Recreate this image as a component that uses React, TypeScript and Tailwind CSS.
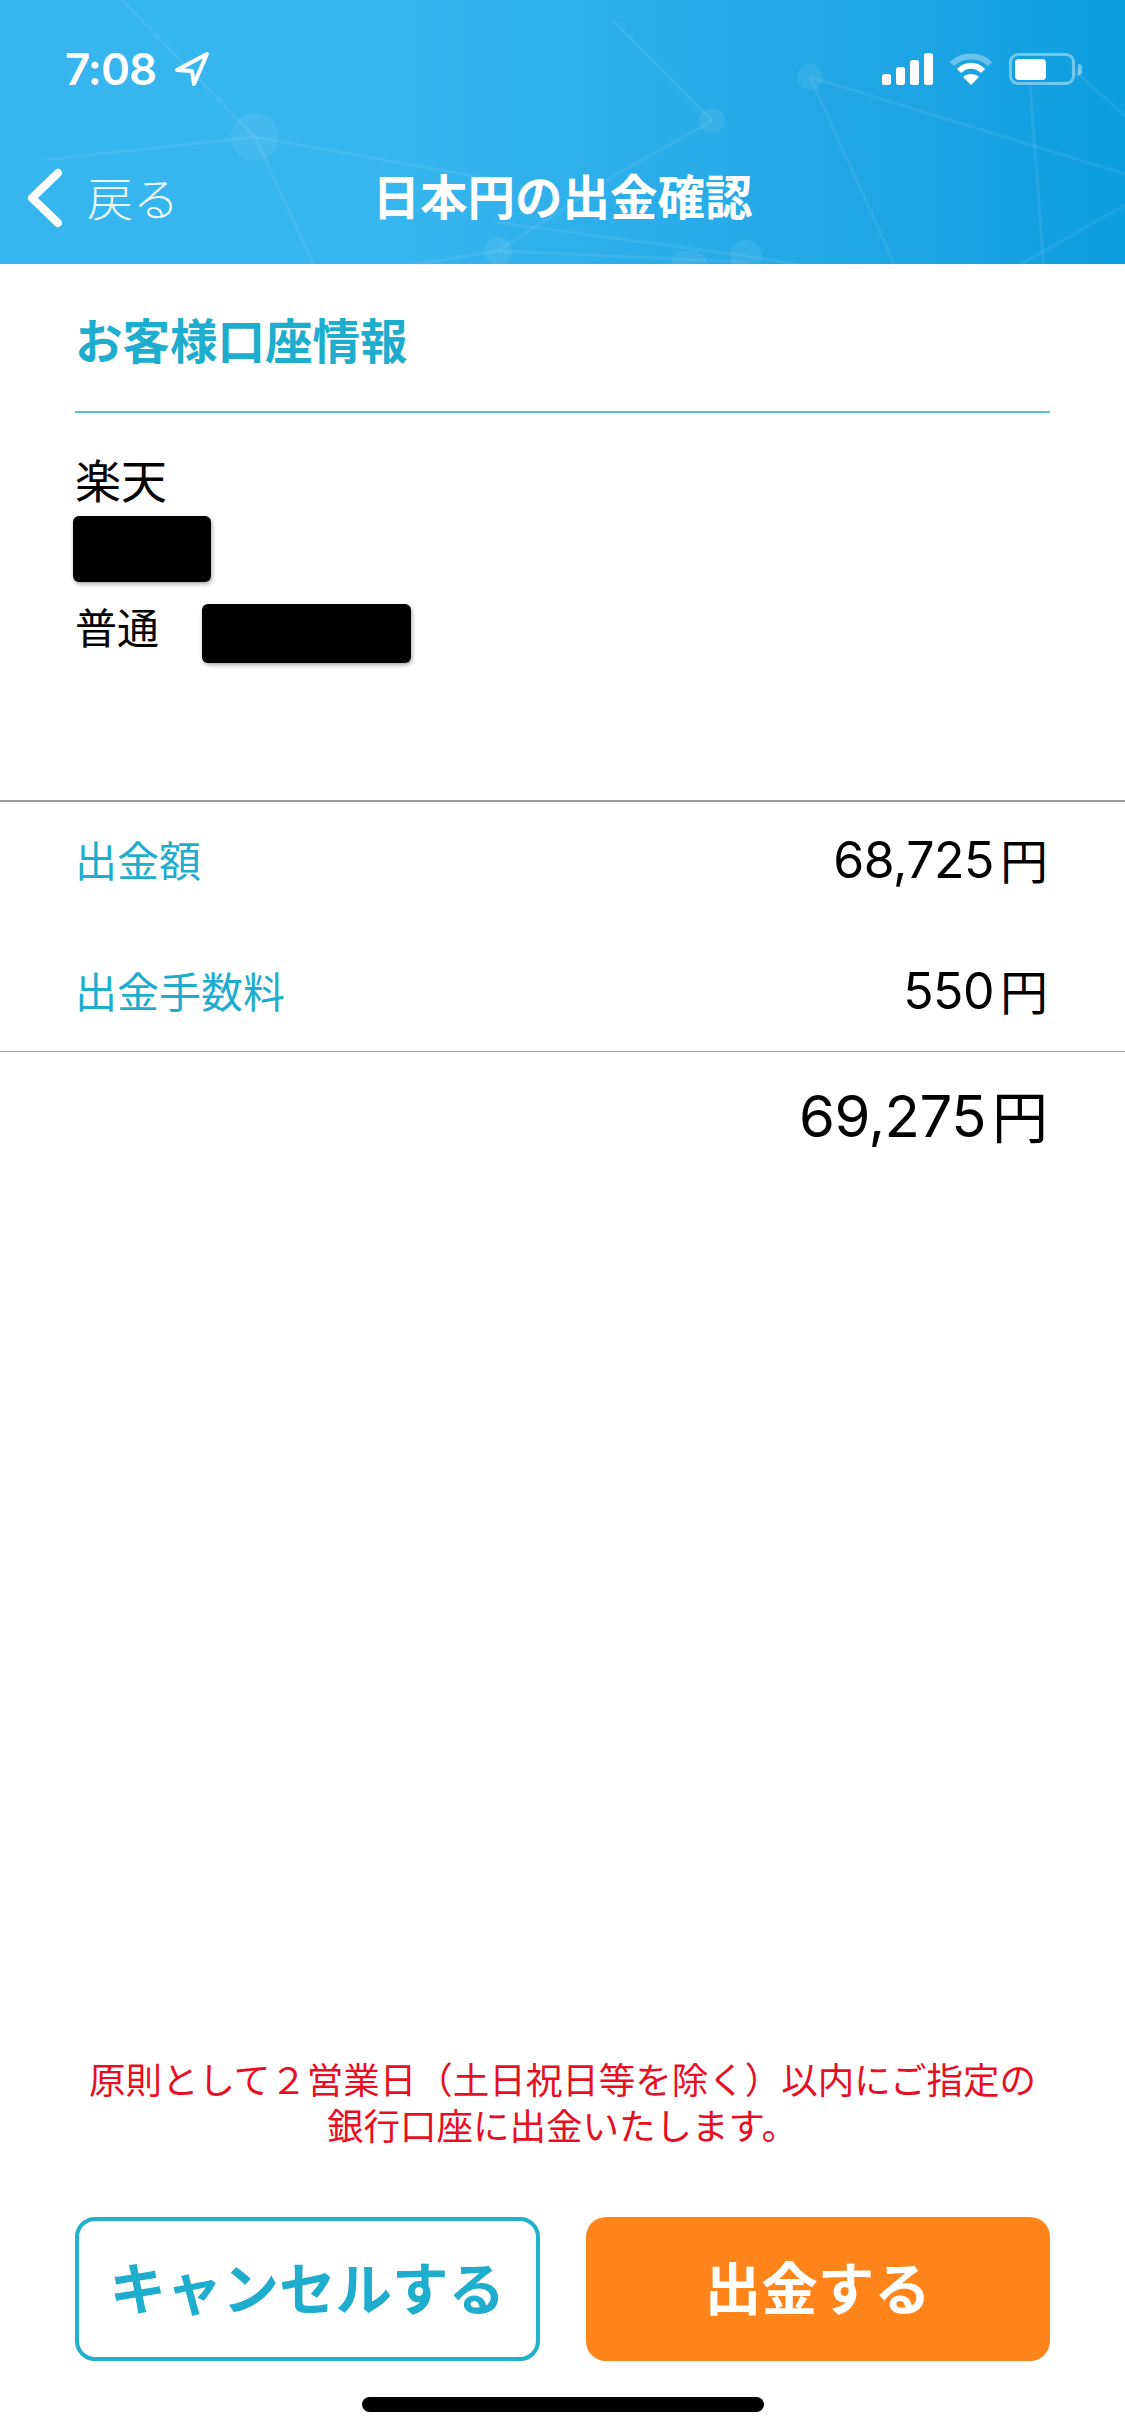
const jp = "font-['Noto_Sans_CJK_JP',sans-serif]";

function HeaderBackdrop() {
  // faint network pattern behind the nav bar
  const lines = [
    [613, 20, 712, 121], [712, 121, 617, 174], [810, 77, 1125, 174], [810, 77, 897, 270],
    [1030, 85, 1044, 270], [1076, 72, 1125, 116], [1125, 205, 1011, 270], [255, 137, 122, 0],
    [255, 137, 43, 160], [255, 137, 502, 181], [255, 137, 316, 270], [498, 251, 746, 262],
    [746, 256, 495, 222], [498, 251, 380, 270], [617, 174, 498, 251], [746, 256, 830, 270],
  ];
  const dots = [
    [810, 77, 13], [712, 121, 13], [255, 137, 24], [498, 251, 14], [746, 256, 16], [689, 270, 20], [1076, 72, 5],
  ];
  return (
    <svg className="absolute inset-0 h-full w-full" viewBox="0 0 1125 264">
      {lines.map((l, i) => (
        <line key={i} x1={l[0]} y1={l[1]} x2={l[2]} y2={l[3]} stroke="#ffffff" strokeOpacity="0.07" strokeWidth="3" />
      ))}
      {dots.map((d, i) => (
        <circle key={i} cx={d[0]} cy={d[1]} r={d[2]} fill="#ffffff" fillOpacity="0.07" />
      ))}
    </svg>
  );
}

function StatusIcons() {
  return (
    <div className="flex items-center">
      <svg width="51" height="32" viewBox="0 0 51 32" fill="#ffffff">
        <rect x="0" y="21" width="9" height="11" rx="2.5" />
        <rect x="14" y="14" width="9" height="18" rx="2.5" />
        <rect x="28" y="7" width="9" height="25" rx="2.5" />
        <rect x="42" y="0" width="9" height="32" rx="2.5" />
      </svg>
      <svg className="ml-[16px]" width="44" height="32" viewBox="0 0 44 32" fill="none" stroke="#ffffff" strokeWidth="6">
        <path d="M3 11 C13 1 31 1 41 11" strokeOpacity="0.35" />
        <path d="M10 18 C17 11 27 11 34 18" />
        <path d="M22 32 L14 24 C18 20 26 20 30 24 Z" fill="#ffffff" stroke="none" />
      </svg>
      <div className="ml-[16px] flex h-[32px] w-[66px] items-center rounded-[9px] border-[3px] border-white/40 pl-[3px]">
        <div className="h-[21px] w-[31px] rounded-[4px] bg-white" />
      </div>
      <div className="ml-[3px] h-[11px] w-[4px] rounded-r-[3px] bg-white/40" />
    </div>
  );
}

function Amount({ value, size, unit }: { value: string; size: string; unit: string }) {
  return (
    <div className="flex items-center text-black">
      <span className={`font-['Inter',sans-serif] tracking-[-0.5px] ${size}`}>{value}</span>
      <span className={`${jp} ml-[6px] pb-[4px] ${unit}`}>円</span>
    </div>
  );
}

export default function App() {
  return (
    <div className={`flex h-[2436px] w-[1125px] flex-col overflow-hidden bg-white ${jp}`}>
      <header className="relative h-[264px] shrink-0 overflow-hidden bg-gradient-to-r from-[#37b5ef] from-35% to-[#0b9ede] text-white">
        <HeaderBackdrop />
        <div className="relative mt-[48px] flex h-[42px] items-center justify-between pl-[65px] pr-[43px]">
          <div className="flex items-center">
            <span className="font-['Inter',sans-serif] text-[44px] font-semibold leading-none tracking-[-1px]">7:08</span>
            <svg className="ml-[18px]" width="36" height="36" viewBox="0 0 36 36" fill="none" stroke="#ffffff" strokeWidth="4" strokeLinejoin="round">
              <path d="M33 3 L3 19 L18 20 L20 33 Z" />
            </svg>
          </div>
          <StatusIcons />
        </div>
        <div className="relative mt-[72px] grid h-[72px] grid-cols-[1fr_auto_1fr] items-center">
          <div className="flex items-center pl-[26px]">
            <svg width="38" height="60" viewBox="0 0 38 60" fill="none" stroke="#ffffff" strokeWidth="8" strokeLinecap="round" strokeLinejoin="round">
              <path d="M32 5 L6 30 L32 55" />
            </svg>
            <span className="ml-[23px] pb-[5px] text-[46px] font-light leading-none text-white/90">戻る</span>
          </div>
          <h1 className="pb-[6px] text-[47.5px] font-bold leading-none">日本円の出金確認</h1>
          <div />
        </div>
      </header>

      <section className="h-[538px] shrink-0 border-b-2 border-[#999999] px-[75px]">
        <div className="border-b-2 border-[#5cc0d8] pb-[33px] pt-[36px]">
          <h2 className="text-[47.5px] font-bold leading-[78px] text-[#1fadcd]">お客様口座情報</h2>
        </div>
        <p className="mt-[35px] text-[46px] leading-[60px] text-black">楽天</p>
        <div className="ml-[-2px] mt-[8px] h-[66px] w-[138px] rounded-[6px] bg-black shadow-[1px_2px_4px_rgba(0,0,0,0.35)]" />
        <div className="mt-[22px] flex items-start">
          <span className="mt-[-2px] text-[42px] leading-[48px] text-black">普通</span>
          <div className="ml-[43px] h-[59px] w-[209px] rounded-[6px] bg-black shadow-[1px_2px_4px_rgba(0,0,0,0.35)]" />
        </div>
      </section>

      <section className="shrink-0 border-b-[1.5px] border-[#a0a0a0] pb-[2px] pl-[75px] pr-[77px]">
        <div className="flex h-[116px] items-center justify-between">
          <span className="pb-[3px] text-[42px] text-[#1fadcd]">出金額</span>
          <Amount value="68,725" size="text-[50px]" unit="text-[48px]" />
        </div>
        <div className="mt-[15px] flex h-[116px] items-center justify-between">
          <span className="pb-[3px] text-[42px] text-[#1fadcd]">出金手数料</span>
          <Amount value="550" size="text-[50px]" unit="text-[48px]" />
        </div>
      </section>

      <div className="flex h-[128px] shrink-0 items-center justify-end pr-[77px]">
        <Amount value="69,275" size="text-[58px]" unit="text-[56px]" />
      </div>

      <div className="mt-auto flex flex-col px-[75px] pb-[24px]">
        <p className="text-center text-[36.5px] leading-[46px] text-[#e60f23]">
          原則として２営業日（土日祝日等を除く）以内にご指定の
          <br />
          銀行口座に出金いたします。
        </p>
        <div className="mt-[69px] grid grid-cols-2 gap-[46px]">
          <button className="h-[144px] rounded-[20px] border-4 border-[#22b0cf] bg-white pb-[8px] text-[56.5px] font-bold text-[#1fadcd]">
            キャンセルする
          </button>
          <button className="h-[144px] rounded-[20px] bg-[#ff8419] pb-[8px] text-[56.5px] font-bold text-white">出金する</button>
        </div>
        <div className="mx-auto mt-[36px] h-[15px] w-[402px] rounded-full bg-black" />
      </div>
    </div>
  );
}
